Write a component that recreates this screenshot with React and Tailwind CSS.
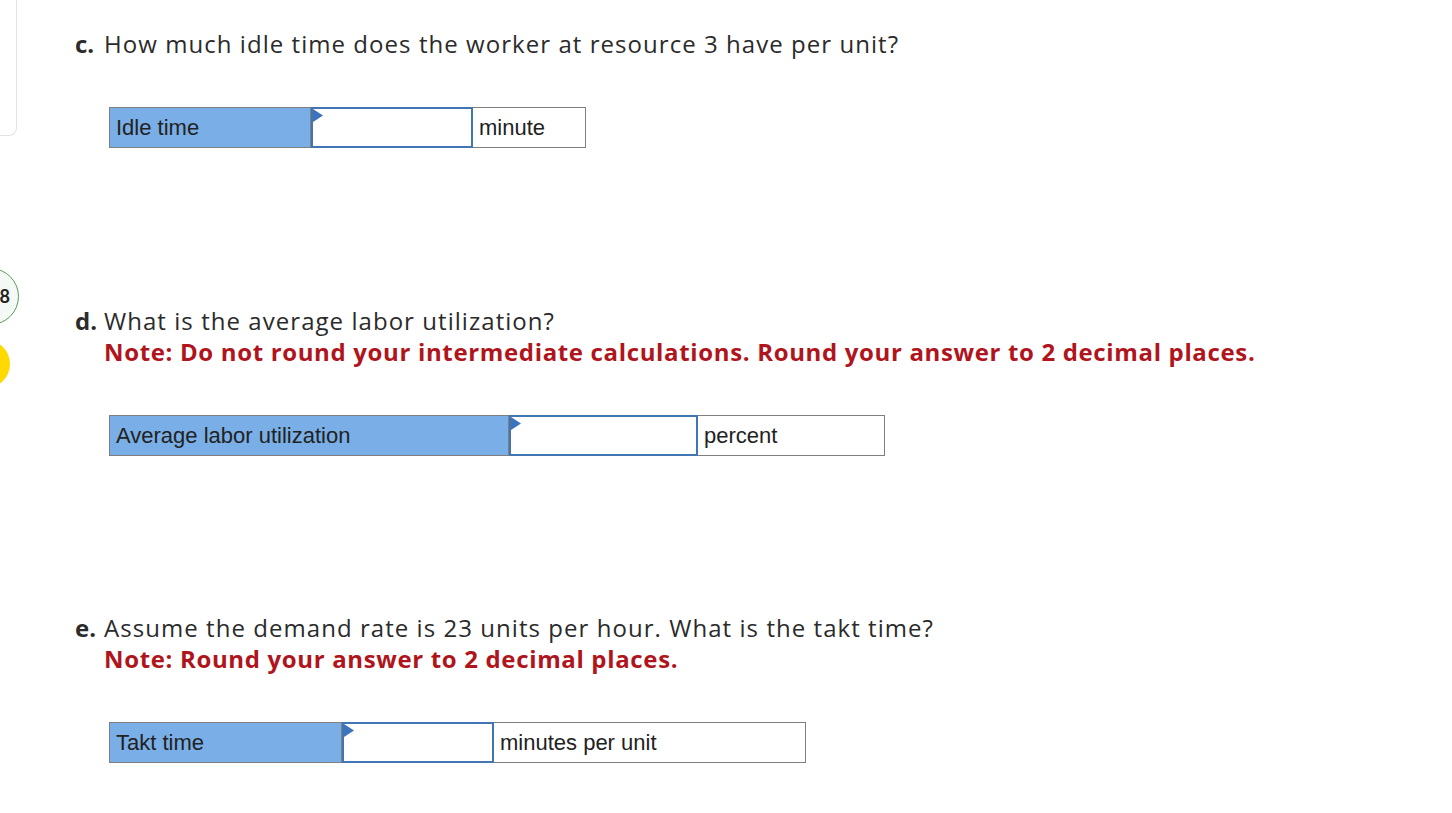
const QFONT = 'font-["Open_Sans","Lato",sans-serif]';

function Question({ letter, text, note }) {
  return (
    <div className={`flex text-[24px] leading-[31px] text-[#2b2b2b] ${QFONT}`}>
      <span className="w-[29px] shrink-0 font-bold">{letter}</span>
      <div>
        <p className="tracking-[1.05px]">{text}</p>
        {note && <p className="font-bold tracking-[0.65px] text-[#b0141c]">{note}</p>}
      </div>
    </div>
  );
}

function AnswerRow({ label, unit, widths }) {
  const [lw, iw, uw] = widths;
  return (
    <div className='ml-[34px] flex h-[41px] text-[22px] text-[#222] font-["Liberation_Sans",Arial,sans-serif]'>
      <div
        className="flex items-center border border-[#7f7f7f] bg-[#79aee6] pl-[6px]"
        style={{ width: lw }}
      >
        {label}
      </div>
      <div
        className="relative border-2 border-[#4275b3] bg-white"
        style={{ width: iw }}
      >
        <svg className="absolute left-0 top-0" width="10" height="13" viewBox="0 0 10 13">
          <path d="M0 0 L10 6.5 L0 13 Z" fill="#3b73bd" />
        </svg>
      </div>
      <div
        className="flex items-center border border-l-0 border-[#7f7f7f] bg-white pl-[6px]"
        style={{ width: uw }}
      >
        {unit}
      </div>
    </div>
  );
}

export default function App() {
  return (
    <div className="flex min-h-screen bg-white">
      {/* clipped side panel */}
      <div className="w-[20px] shrink-0 overflow-hidden">
        <div className="ml-[-283px] h-[136px] w-[300px] rounded-br-lg border border-t-0 border-[#e3e3e3]" />
        <div className='mt-[132px] ml-[-38px] flex h-[57px] w-[57px] items-center justify-end rounded-full border border-[#5e9a5e] bg-[#f5f9f5] pr-[8px] text-[18px] font-bold text-[#222] font-["Lato",sans-serif]'>
          8
        </div>
        <div className="mt-[15px] ml-[-38px] h-[48px] w-[48px] rounded-full bg-[#ffd900]" />
      </div>

      <div className="pl-[55px] pt-[28px]">
        <Question
          letter="c."
          text="How much idle time does the worker at resource 3 have per unit?"
        />
        <div className="mt-[48px]">
          <AnswerRow label="Idle time" unit="minute" widths={[202, 162, 113]} />
        </div>

        <div className="mt-[157px]">
          <Question
            letter="d."
            text="What is the average labor utilization?"
            note="Note: Do not round your intermediate calculations. Round your answer to 2 decimal places."
          />
        </div>
        <div className="mt-[48px]">
          <AnswerRow label="Average labor utilization" unit="percent" widths={[400, 189, 187]} />
        </div>

        <div className="mt-[156px]">
          <Question
            letter="e."
            text="Assume the demand rate is 23 units per hour. What is the takt time?"
            note="Note: Round your answer to 2 decimal places."
          />
        </div>
        <div className="mt-[48px]">
          <AnswerRow label="Takt time" unit="minutes per unit" widths={[233, 152, 312]} />
        </div>
      </div>
    </div>
  );
}
